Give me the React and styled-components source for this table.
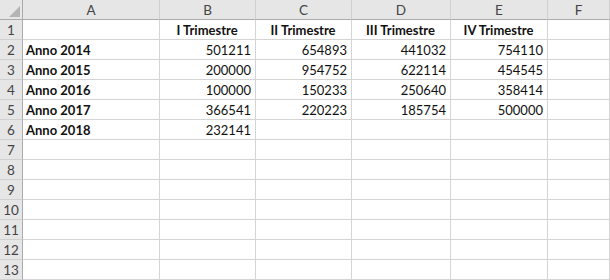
import { Fragment } from 'react';
import styled, { createGlobalStyle } from 'styled-components';

const Global = createGlobalStyle`
  body {
    margin: 0;
    background: #ffffff;
    font-family: Lato, "Open Sans", sans-serif;
  }
`;

const Sheet = styled.div`
  display: grid;
  grid-template-columns: 23px 137px 96px 96px 99px 97px 62px;
  grid-auto-rows: 20px;
  width: 610px;
  height: 280px;
  overflow: hidden;
`;

const Corner = styled.div`
  position: relative;
  background: #e6e6e6;
  border-right: 1px solid #ababab;
  border-bottom: 1px solid #ababab;
  box-sizing: border-box;

  &::after {
    content: '';
    position: absolute;
    right: 2px;
    bottom: 2px;
    width: 0;
    height: 0;
    border-left: 11px solid transparent;
    border-bottom: 11px solid #b4b4b4;
  }
`;

const ColHead = styled.div`
  background: #e6e6e6;
  border-right: 1px solid #d0d0d0;
  border-bottom: 1px solid #ababab;
  box-sizing: border-box;
  display: flex;
  align-items: center;
  justify-content: center;
  font-size: 13.5px;
  color: #444;
`;

const RowHead = styled.div`
  background: #e6e6e6;
  border-right: 1px solid #ababab;
  border-bottom: 1px solid #d0d0d0;
  box-sizing: border-box;
  display: flex;
  align-items: center;
  justify-content: center;
  font-size: 13.5px;
  color: #444;
`;

const Cell = styled.div`
  border-right: 1px solid #d4d4d4;
  border-bottom: 1px solid #d4d4d4;
  box-sizing: border-box;
  display: flex;
  align-items: center;
  justify-content: ${(p) => (p.$num ? 'flex-end' : p.$center ? 'center' : 'flex-start')};
  padding: 1px 4px 0 3px;
  font-size: 13px;
  font-weight: ${(p) => (p.$bold ? 700 : 400)};
  color: #111;
  white-space: nowrap;
`;

const cols = ['A', 'B', 'C', 'D', 'E', 'F'];
const quarters = ['I Trimestre', 'II Trimestre', 'III Trimestre', 'IV Trimestre'];
const data = [
  ['Anno 2014', 501211, 654893, 441032, 754110],
  ['Anno 2015', 200000, 954752, 622114, 454545],
  ['Anno 2016', 100000, 150233, 250640, 358414],
  ['Anno 2017', 366541, 220223, 185754, 500000],
  ['Anno 2018', 232141],
];

function Row({ n }) {
  if (n === 1) {
    return (
      <>
        <RowHead>{n}</RowHead>
        <Cell />
        {quarters.map((q) => (
          <Cell key={q} $bold $center>{q}</Cell>
        ))}
        <Cell />
      </>
    );
  }
  const d = data[n - 2] || [];
  return (
    <>
      <RowHead>{n}</RowHead>
      <Cell $bold>{d[0]}</Cell>
      {[1, 2, 3, 4].map((c) => (
        <Cell key={c} $num>{d[c]}</Cell>
      ))}
      <Cell />
    </>
  );
}

export default function App() {
  const rows = Array.from({ length: 13 }, (_, i) => i + 1);
  return (
    <>
      <Global />
      <Sheet>
        <Corner />
        {cols.map((c) => (
          <ColHead key={c}>{c}</ColHead>
        ))}
        {rows.map((n) => (
          <Fragment key={n}>
            <Row n={n} />
          </Fragment>
        ))}
      </Sheet>
    </>
  );
}
